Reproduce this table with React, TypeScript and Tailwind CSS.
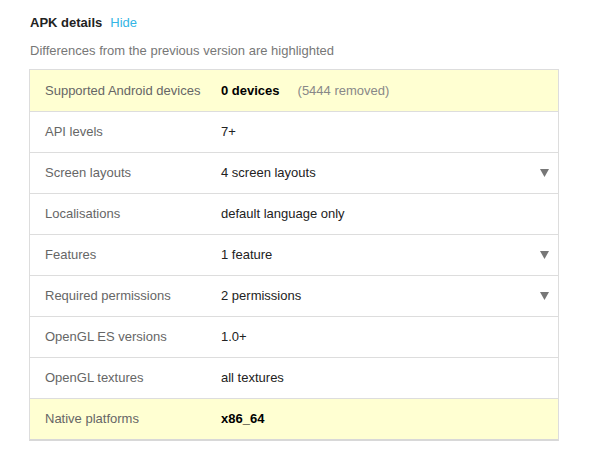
import { ReactNode } from 'react';

type Row = {
  label: string;
  value: ReactNode;
  changed?: boolean;
  expandable?: boolean;
};

const rows: Row[] = [
  {
    label: 'Supported Android devices',
    value: (
      <>
        <span className="font-bold text-black">0 devices</span>
        <span className="ml-[18px] text-[#888]">(5444 removed)</span>
      </>
    ),
    changed: true,
  },
  { label: 'API levels', value: '7+' },
  { label: 'Screen layouts', value: '4 screen layouts', expandable: true },
  { label: 'Localisations', value: 'default language only' },
  { label: 'Features', value: '1 feature', expandable: true },
  { label: 'Required permissions', value: '2 permissions', expandable: true },
  { label: 'OpenGL ES versions', value: '1.0+' },
  { label: 'OpenGL textures', value: 'all textures' },
  {
    label: 'Native platforms',
    value: <span className="font-bold text-black">x86_64</span>,
    changed: true,
  },
];

export default function App() {
  return (
    <div
      className="min-h-screen bg-white pl-[30px] pt-[15px] text-[13px]"
      style={{ fontFamily: '"Liberation Sans", Arial, sans-serif' }}
    >
      {/* Header */}
      <div className="flex items-center gap-[8px] h-[16px]">
        <span className="font-bold text-[#222]">APK details</span>
        <button className="text-[#33b5e5]">Hide</button>
      </div>
      <p className="mt-[10px] h-[16px] text-[#777]">
        Differences from the previous version are highlighted
      </p>

      {/* Details table */}
      <div className="mt-[12px] -ml-px w-[530px] border border-[#ddd] border-b-2 border-b-[#d8d8d8]">
        {rows.map((row, i) => (
          <div
            key={row.label}
            className={`flex items-center h-[41px] ${i > 0 ? 'border-t border-[#ddd]' : 'h-[40px]'} ${
              row.changed ? 'bg-[#ffffd2]' : 'bg-white'
            }`}
          >
            <div className="w-[176px] pl-[15px] text-[#666]">{row.label}</div>
            <div className="flex-1 pl-[15px] text-[#222]">{row.value}</div>
            {row.expandable && (
              <svg width="9" height="8" viewBox="0 0 9 8" className="mr-[9px]">
                <path d="M0 0 H9 L4.5 8 Z" fill="#777" />
              </svg>
            )}
          </div>
        ))}
      </div>
    </div>
  );
}
